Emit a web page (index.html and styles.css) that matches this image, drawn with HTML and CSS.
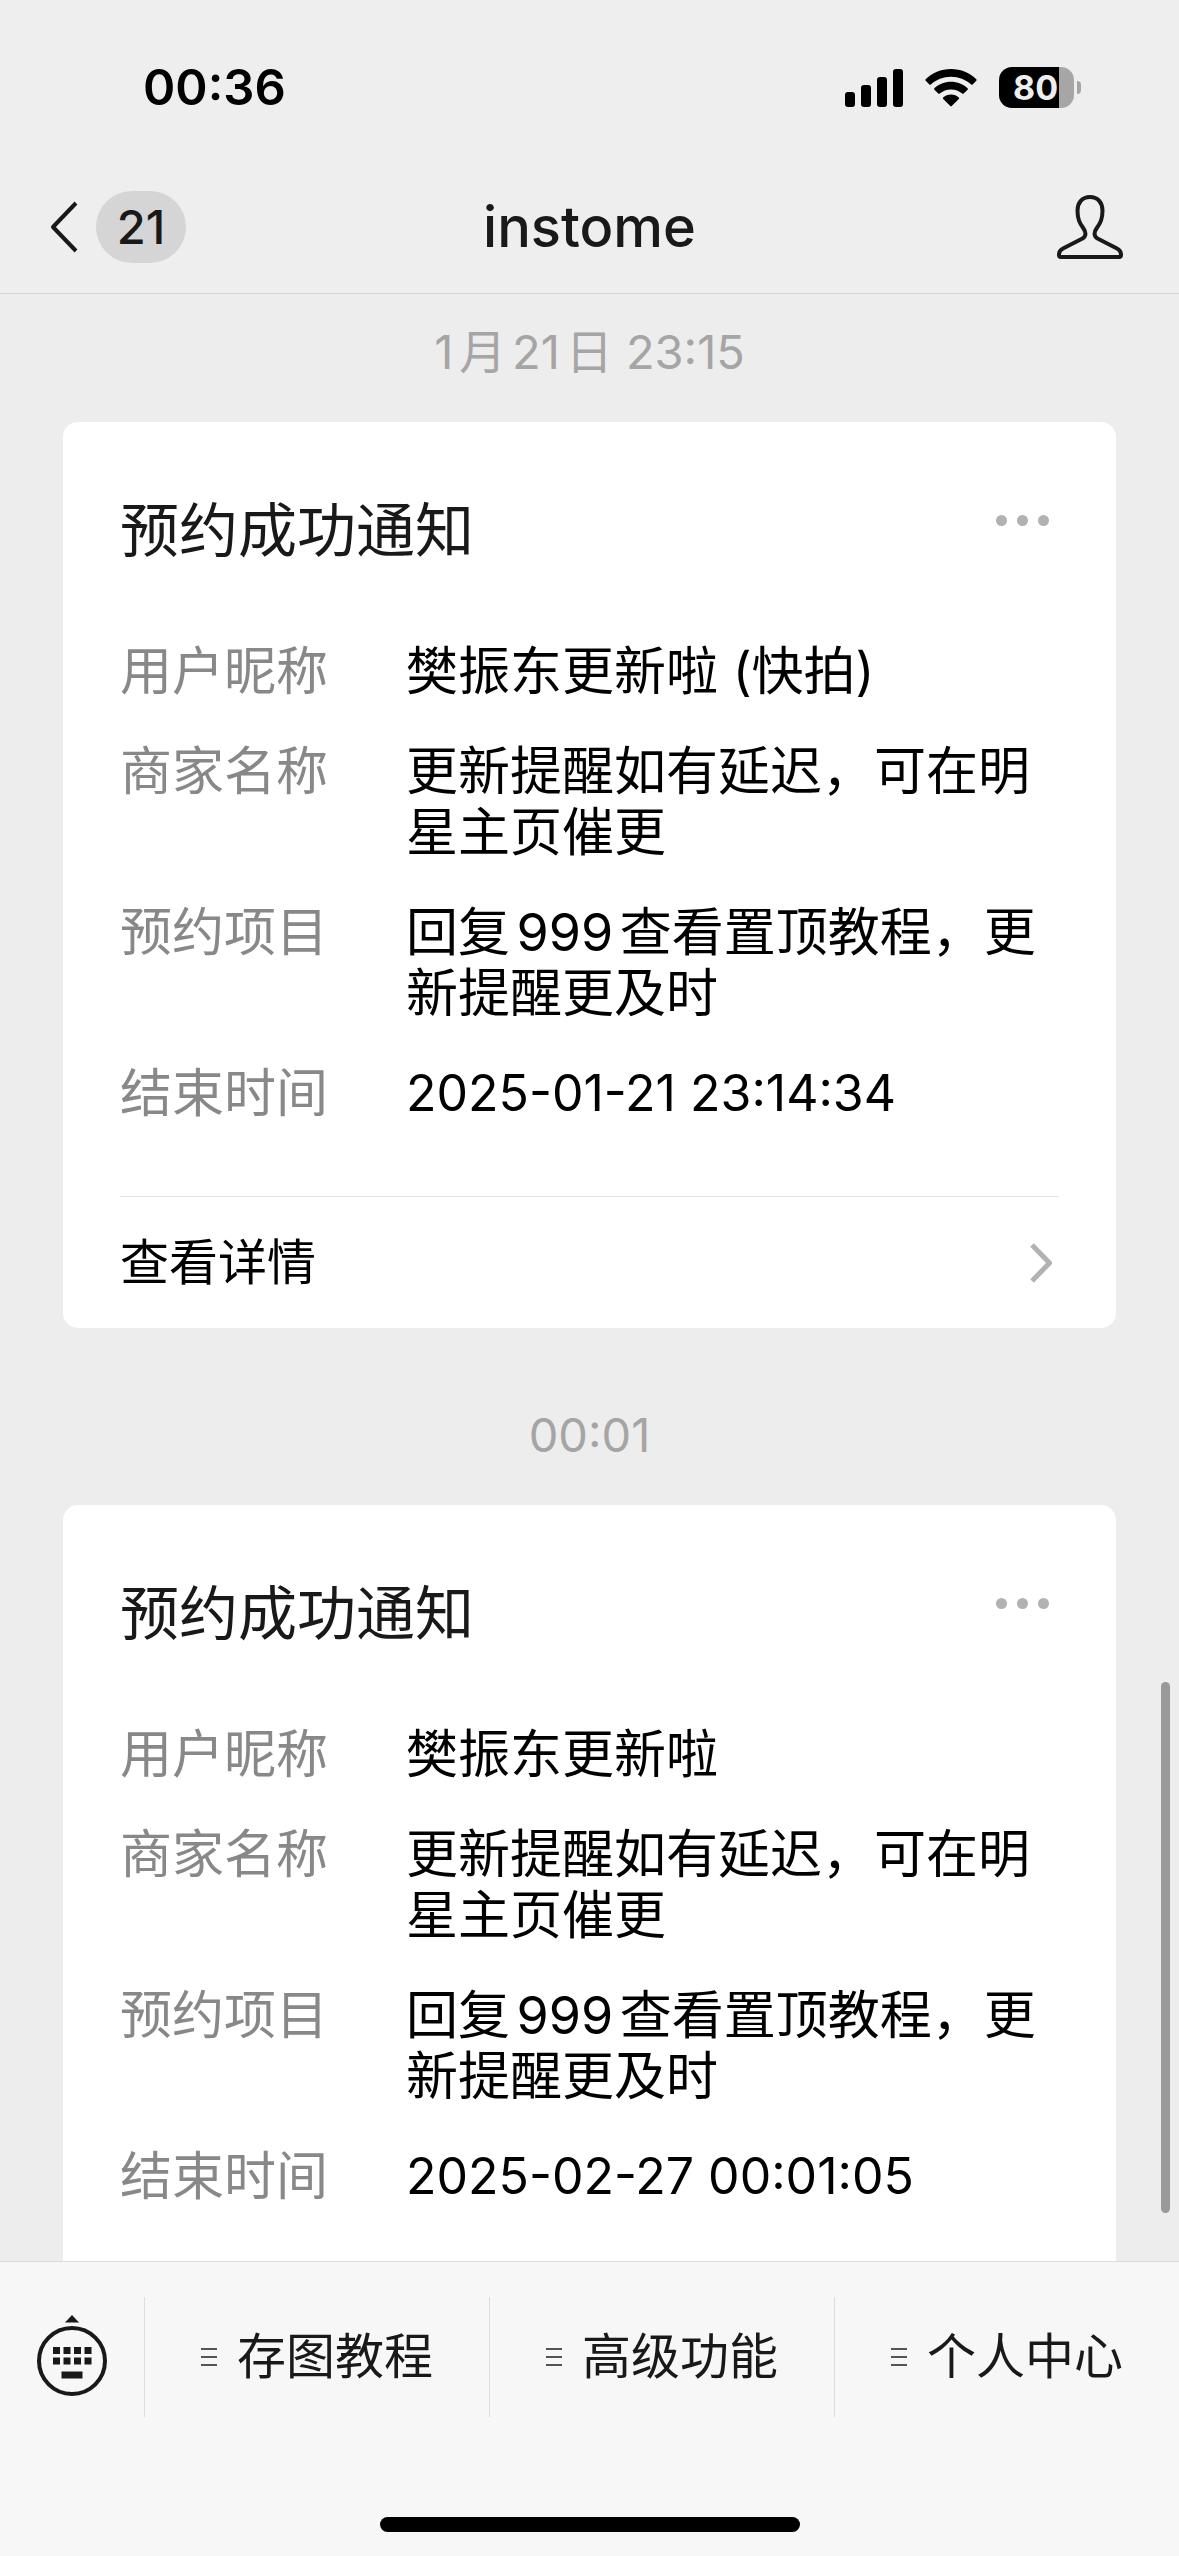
FILE: index.html
```html
<!DOCTYPE html>
<html lang="zh-CN">
<head>
<meta charset="utf-8">
<meta name="viewport" content="width=device-width, initial-scale=1">
<title>instome</title>
<link rel="stylesheet" href="styles.css">
</head>
<body>
<header class="top">
  <div class="status">
    <span class="clock">00:36</span>
    <div class="indicators">
      <svg class="signal" width="58" height="38" viewBox="0 0 58 38" aria-hidden="true">
        <rect x="0" y="23" width="10" height="15" rx="3"/>
        <rect x="16" y="16" width="10" height="22" rx="3"/>
        <rect x="32" y="8" width="10" height="30" rx="3"/>
        <rect x="48" y="0" width="10" height="38" rx="3"/>
      </svg>
      <svg class="wifi" width="52" height="38" viewBox="0 0 52 38" aria-hidden="true">
        <path d="M26 0C36 0 45 4 51.300 10.300Q52 11 51.300 11.700L47.600 15.500Q46.900 16.200 46.200 15.500C40.800 10.500 33.700 7.700 26 7.700S11.200 10.500 5.800 15.500Q5.100 16.200 4.400 15.500L.7 11.700Q0 11 .7 10.300C7 4 16 0 26 0Z"/>
        <path d="M26 12.800C32.500 12.800 38.300 15.300 42.600 19.300Q43.300 20 42.600 20.700L38.700 24.600Q38 25.300 37.300 24.600C34.300 21.900 30.300 20.400 26 20.400S17.700 21.900 14.700 24.600Q14 25.300 13.300 24.600L9.400 20.700Q8.700 20 9.400 19.300C13.700 15.300 19.500 12.800 26 12.800Z"/>
        <path d="M26 25.500C29 25.500 31.800 26.600 33.800 28.400Q34.600 29.100 33.800 29.900L26.700 37.100Q26 37.800 25.300 37.100L18.200 29.900Q17.400 29.100 18.200 28.400C20.200 26.600 23 25.500 26 25.500Z"/>
      </svg>
      <div class="battery"><span class="battery-level">80</span></div>
    </div>
  </div>
  <nav class="nav">
    <button class="back" type="button" aria-label="返回">
      <svg width="28" height="52" viewBox="0 0 28 52" aria-hidden="true"><path d="M26 2L3 26L26 50"/></svg>
      <span class="unread">21</span>
    </button>
    <h1 class="nav-title">instome</h1>
    <button class="profile" type="button" aria-label="资料">
      <svg width="66" height="64" viewBox="0 0 66 64" aria-hidden="true">
        <path d="M33 2C25 2 20.500 8 20.500 15.500C20.500 24 22.500 28 26.500 33.500C29 37 29.500 41 25.500 43.500L6 53.500C3 55 2 57 2 59.500V60Q2 62 4 62H62Q64 62 64 60V59.500C64 57 63 55 60 53.500L40.500 43.500C36.500 41 37 37 39.500 33.500C43.500 28 45.500 24 45.500 15.500C45.500 8 41 2 33 2Z"/>
      </svg>
    </button>
  </nav>
</header>

<main class="chat">
  <time class="stamp">1月21日 23:15</time>
  <article class="card">
    <div class="card-head">
      <h2 class="card-title">预约成功通知</h2>
      <button class="more" type="button" aria-label="更多"><i></i><i></i><i></i></button>
    </div>
    <dl class="fields">
      <dt>用户昵称</dt><dd>樊振东更新啦 (快拍)</dd>
      <dt>商家名称</dt><dd>更新提醒如有延迟，可在明星主页催更</dd>
      <dt>预约项目</dt><dd>回复999查看置顶教程，更新提醒更及时</dd>
      <dt>结束时间</dt><dd class="datetime">2025-01-21 23:14:34</dd>
    </dl>
    <a class="detail" href="#detail">
      <span>查看详情</span>
      <svg width="22" height="40" viewBox="0 0 22 40" aria-hidden="true"><path d="M2 2L19.500 20L2 38"/></svg>
    </a>
  </article>

  <time class="stamp">00:01</time>
  <article class="card">
    <div class="card-head">
      <h2 class="card-title">预约成功通知</h2>
      <button class="more" type="button" aria-label="更多"><i></i><i></i><i></i></button>
    </div>
    <dl class="fields">
      <dt>用户昵称</dt><dd>樊振东更新啦</dd>
      <dt>商家名称</dt><dd>更新提醒如有延迟，可在明星主页催更</dd>
      <dt>预约项目</dt><dd>回复999查看置顶教程，更新提醒更及时</dd>
      <dt>结束时间</dt><dd class="datetime">2025-02-27 00:01:05</dd>
    </dl>
  </article>
  <div class="scroll-thumb"></div>
</main>

<footer class="bottom">
  <div class="menu">
    <button class="keyboard" type="button" aria-label="键盘">
      <svg width="72" height="82" viewBox="0 0 72 82" aria-hidden="true">
        <path d="M36 0L43 7.500H29Z"/>
        <circle cx="36" cy="46" r="33" fill="none" stroke="currentColor" stroke-width="4"/>
        <path d="M17 32h7v7h-7zM27.500 32h7v7h-7zM38 32h7v7h-7zM48.500 32h7v7h-7zM17 42.500h7v7h-7zM27.500 42.500h7v7h-7zM38 42.500h7v7h-7zM48.500 42.500h7v7h-7zM25.500 56.500h21v7h-21z"/>
      </svg>
    </button>
    <button class="menu-item" type="button"><svg width="16" height="18" viewBox="0 0 16 18" aria-hidden="true"><path d="M0 1H16M0 9H16M0 17H16"/></svg>存图教程</button>
    <button class="menu-item" type="button"><svg width="16" height="18" viewBox="0 0 16 18" aria-hidden="true"><path d="M0 1H16M0 9H16M0 17H16"/></svg>高级功能</button>
    <button class="menu-item" type="button"><svg width="16" height="18" viewBox="0 0 16 18" aria-hidden="true"><path d="M0 1H16M0 9H16M0 17H16"/></svg>个人中心</button>
  </div>
  <div class="home-indicator"></div>
</footer>
</body>
</html>
```
FILE: styles.css
```css
* {
  box-sizing: border-box;
  margin: 0;
  padding: 0;
}

body {
  display: flex;
  flex-direction: column;
  height: 100vh;
  background: #ededed;
  color: #000;
  font-family: Inter, "Noto Sans CJK SC", sans-serif;
  text-autospace: normal;
}

button {
  border: 0;
  background: none;
  color: inherit;
  font: inherit;
}

svg {
  display: block;
  flex: none;
}

/* Status bar and title bar */
.top {
  flex: none;
  border-bottom: 1px solid #d5d5d5;
  background: #eee;
}

.status {
  display: flex;
  align-items: center;
  justify-content: space-between;
  height: 161px;
  padding: 14px 105px 0 143px;
}

.clock {
  font-size: 49px;
  font-weight: 600;
}

.indicators {
  display: flex;
  align-items: center;
  gap: 22px;
}

.battery {
  position: relative;
  width: 75px;
  height: 41px;
  border-radius: 13px;
  background: linear-gradient(to right, #000 60px, #a6a6a6 60px);
}

.battery::after {
  content: "";
  position: absolute;
  top: 14px;
  right: -7px;
  width: 4px;
  height: 13px;
  border-radius: 0 4px 4px 0;
  background: #a6a6a6;
}

.battery-level {
  display: block;
  padding-left: 14px;
  color: #eee;
  font-size: 34px;
  font-weight: 700;
  line-height: 41px;
}

.nav {
  display: grid;
  grid-template-columns: 1fr auto 1fr;
  align-items: center;
  height: 132px;
  padding: 0 50px;
  color: #191919;
}

.back {
  display: flex;
  align-items: center;
  justify-self: start;
  gap: 18px;
}

.back path,
.profile path {
  fill: none;
  stroke: currentColor;
  stroke-width: 4;
  stroke-linejoin: round;
}

.unread {
  width: 90px;
  border-radius: 36px;
  background: #d5d5d5;
  font-size: 47px;
  font-weight: 500;
  line-height: 72px;
}

.nav-title {
  font-size: 56px;
  font-weight: 500;
}

.profile {
  justify-self: end;
  padding-right: 6px;
}

/* Conversation */
.chat {
  position: relative;
  flex: 1;
  min-height: 0;
  overflow: hidden;
  padding: 0 63px;
}

.stamp {
  display: block;
  padding: 28px 0 40px;
  color: #a5a5a5;
  font-size: 47px;
  line-height: 60px;
  text-align: center;
}

.card {
  padding: 0 57px;
  border-radius: 15px;
  background: #fff;
}

.card + .stamp {
  padding-top: 77px;
}

.card-head {
  display: flex;
  justify-content: space-between;
  padding-top: 73px;
  color: #191919;
}

.card-title {
  font-size: 59px;
  font-weight: 400;
  line-height: 72px;
}

.more {
  display: flex;
  gap: 10px;
  align-self: start;
  padding: 20px 10px;
}

.more i {
  width: 11px;
  height: 11px;
  border-radius: 50%;
  background: #b2b2b2;
}

.fields {
  display: grid;
  grid-template-columns: 286px 1fr;
  row-gap: 39px;
  padding: 74px 0 72px;
  font-size: 52px;
  line-height: 61px;
}

.fields dt {
  color: #888;
}

.fields .datetime {
  font-size: 50px;
}

.detail {
  display: flex;
  align-items: center;
  justify-content: space-between;
  height: 132px;
  padding-right: 7px;
  border-top: 1px solid #e5e5e5;
  color: #000;
  font-size: 49px;
  line-height: 60px;
  text-decoration: none;
}

.detail path {
  fill: none;
  stroke: #b2b2b2;
  stroke-width: 5;
  stroke-linejoin: round;
}

.scroll-thumb {
  position: absolute;
  right: 9px;
  bottom: 48px;
  width: 9px;
  height: 531px;
  border-radius: 5px;
  background: #999;
}

/* Account menu */
.bottom {
  flex: none;
  border-top: 1px solid #dcdcdc;
  background: #f7f7f7;
  color: #191919;
}

.menu {
  display: grid;
  grid-template-columns: 144px repeat(3, 1fr);
  padding-top: 35px;
}

.keyboard {
  display: flex;
  justify-content: center;
  padding-top: 18px;
}

.keyboard svg {
  fill: currentColor;
}

.menu-item {
  display: flex;
  align-items: center;
  justify-content: center;
  gap: 20px;
  height: 120px;
  border-left: 1px solid #dcdcdc;
  font-size: 49px;
  line-height: 60px;
}

.menu-item path {
  stroke: #555;
  stroke-width: 2;
}

.home-indicator {
  width: 420px;
  height: 15px;
  margin: 100px auto 24px;
  border-radius: 8px;
  background: #000;
}
```
